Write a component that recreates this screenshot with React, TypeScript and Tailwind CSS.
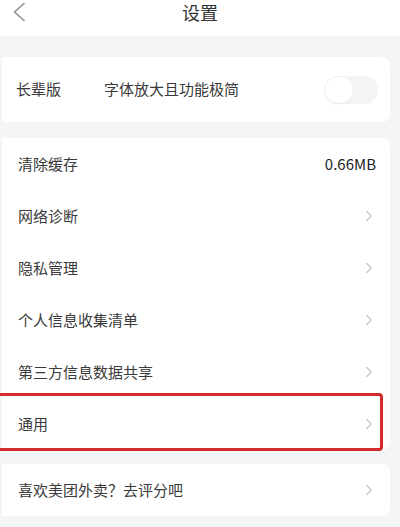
import { ChevronRight } from 'lucide-react'

const font = { fontFamily: '"Noto Sans CJK SC", "Noto Sans", sans-serif' }

const group2 = ['网络诊断', '隐私管理', '个人信息收集清单', '第三方信息数据共享', '通用']

function Row({ label, children }: { label: string; children?: React.ReactNode }) {
    return (
        <div className="flex h-[52px] items-center justify-between pl-[16px] pr-[12px]">
            <span className="text-[15px] text-[#3a3a3a]">{label}</span>
            {children ?? <ChevronRight className="h-[18px] w-[18px] text-[#c4c4c4]" strokeWidth={1.6} />}
        </div>
    )
}

export default function App() {
    return (
        <div className="relative h-[527px] w-[400px] overflow-hidden bg-[#f4f5f7]" style={font}>
            <header className="relative flex h-[36px] items-center justify-center bg-white">
                <svg className="absolute left-[10px] top-0 h-[24px] w-[20px]" viewBox="0 0 20 24" fill="none">
                    <polyline points="14,3.5 4.5,12 14,20.5" stroke="#8c8c8c" strokeWidth="1.6" strokeLinecap="round" strokeLinejoin="round" />
                </svg>
                <span className="-mt-[12px] text-[18px] text-[#333]">设置</span>
            </header>

            <div className="mt-[21px] ml-[2px] w-[388px] rounded-r-[8px] bg-white">
                <div className="flex h-[65px] items-center pl-[14px] pr-[12px]">
                    <span className="w-[88px] text-[15px] text-[#3a3a3a]">长辈版</span>
                    <span className="flex-1 text-[15px] text-[#3a3a3a]">字体放大且功能极简</span>
                    <div className="flex h-[28px] w-[54px] items-center rounded-full bg-[#f3f4f6] p-[1px]">
                        <div className="h-[26px] w-[28px] rounded-full bg-white shadow-[0_1px_3px_rgba(0,0,0,0.05)]" />
                    </div>
                </div>
            </div>

            <div className="mt-[16px] ml-[2px] w-[388px] rounded-r-[8px] bg-white">
                <Row label="清除缓存">
                    <span className="pr-[2px] text-[15px] text-[#222]">0.66MB</span>
                </Row>
                {group2.map((l) => (
                    <Row key={l} label={l} />
                ))}
            </div>

            <div className="mt-[14px] ml-[2px] w-[388px] rounded-r-[8px] bg-white">
                <Row label="喜欢美团外卖？去评分吧" />
            </div>

            <div className="pointer-events-none absolute left-[-4px] top-[393px] h-[58px] w-[387px] rounded-[4px] border-[3px] border-[#d42a2a]" />
        </div>
    )
}
